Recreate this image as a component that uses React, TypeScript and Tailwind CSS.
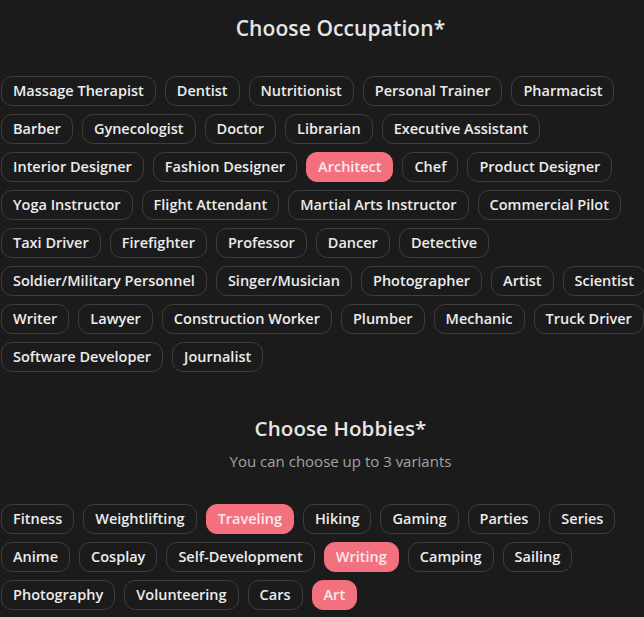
import { useState } from "react";

// Chips are laid out in the same rows as the design
const occupationRows = [
  ["Massage Therapist", "Dentist", "Nutritionist", "Personal Trainer", "Pharmacist"],
  ["Barber", "Gynecologist", "Doctor", "Librarian", "Executive Assistant"],
  ["Interior Designer", "Fashion Designer", "Architect", "Chef", "Product Designer"],
  ["Yoga Instructor", "Flight Attendant", "Martial Arts Instructor", "Commercial Pilot"],
  ["Taxi Driver", "Firefighter", "Professor", "Dancer", "Detective"],
  ["Soldier/Military Personnel", "Singer/Musician", "Photographer", "Artist", "Scientist"],
  ["Writer", "Lawyer", "Construction Worker", "Plumber", "Mechanic", "Truck Driver"],
  ["Software Developer", "Journalist"],
];

const hobbyRows = [
  ["Fitness", "Weightlifting", "Traveling", "Hiking", "Gaming", "Parties", "Series"],
  ["Anime", "Cosplay", "Self-Development", "Writing", "Camping", "Sailing"],
  ["Photography", "Volunteering", "Cars", "Art"],
];

function Chip({
  label,
  active,
  onClick,
}: {
  label: string;
  active: boolean;
  onClick: () => void;
}) {
  return (
    <button
      type="button"
      onClick={onClick}
      className={
        active
          ? "h-[30px] shrink-0 whitespace-nowrap rounded-[11px] border border-[#f3717f] bg-[#f3717f] px-[11px] text-[14.5px] font-semibold leading-none text-[#fbe9eb]"
          : "h-[30px] shrink-0 whitespace-nowrap rounded-[11px] border border-[#3d3d3d] bg-[#1b1b1b] px-[11px] text-[14.5px] font-semibold leading-none text-[#ececec]"
      }
    >
      {label}
    </button>
  );
}

export default function App() {
  const [job, setJob] = useState("Architect");
  const [picked, setPicked] = useState<string[]>(["Traveling", "Writing", "Art"]);

  // Toggle a hobby, max 3 at once
  const toggleHobby = (h: string) => {
    setPicked((prev) =>
      prev.includes(h)
        ? prev.filter((x) => x !== h)
        : prev.length < 3
          ? [...prev, h]
          : prev
    );
  };

  return (
    <div
      className="min-h-screen w-[644px] overflow-hidden bg-[#1b1b1b] text-white"
      style={{ fontFamily: '"Open Sans", "Noto Sans", sans-serif' }}
    >
      <div className="w-[680px] pl-px pt-[14px]">
        {/* Occupation */}
        <section>
          <h2 className="text-center text-[21px] font-semibold leading-[28px] tracking-[0.1px] text-[#e6e6e6]">
            Choose Occupation*
          </h2>
          <div className="mt-[34px] flex flex-col gap-[8px]">
            {occupationRows.map((row, i) => (
              <div key={i} className="flex gap-[9px]">
                {row.map((o) => (
                  <Chip key={o} label={o} active={job === o} onClick={() => setJob(o)} />
                ))}
              </div>
            ))}
          </div>
        </section>

        {/* Hobbies */}
        <section className="mt-[42px]">
          <h2 className="text-center text-[20.5px] font-semibold leading-[28px] tracking-[0.1px] text-[#e6e6e6]">
            Choose Hobbies*
          </h2>
          <p className="mt-[9px] text-center text-[15px] leading-[20px] text-[#a3a3a3]">
            You can choose up to 3 variants
          </p>
          <div className="mt-[33px] flex flex-col gap-[8px]">
            {hobbyRows.map((row, i) => (
              <div key={i} className="flex gap-[9px]">
                {row.map((h) => (
                  <Chip
                    key={h}
                    label={h}
                    active={picked.includes(h)}
                    onClick={() => toggleHobby(h)}
                  />
                ))}
              </div>
            ))}
          </div>
        </section>
      </div>
    </div>
  );
}
